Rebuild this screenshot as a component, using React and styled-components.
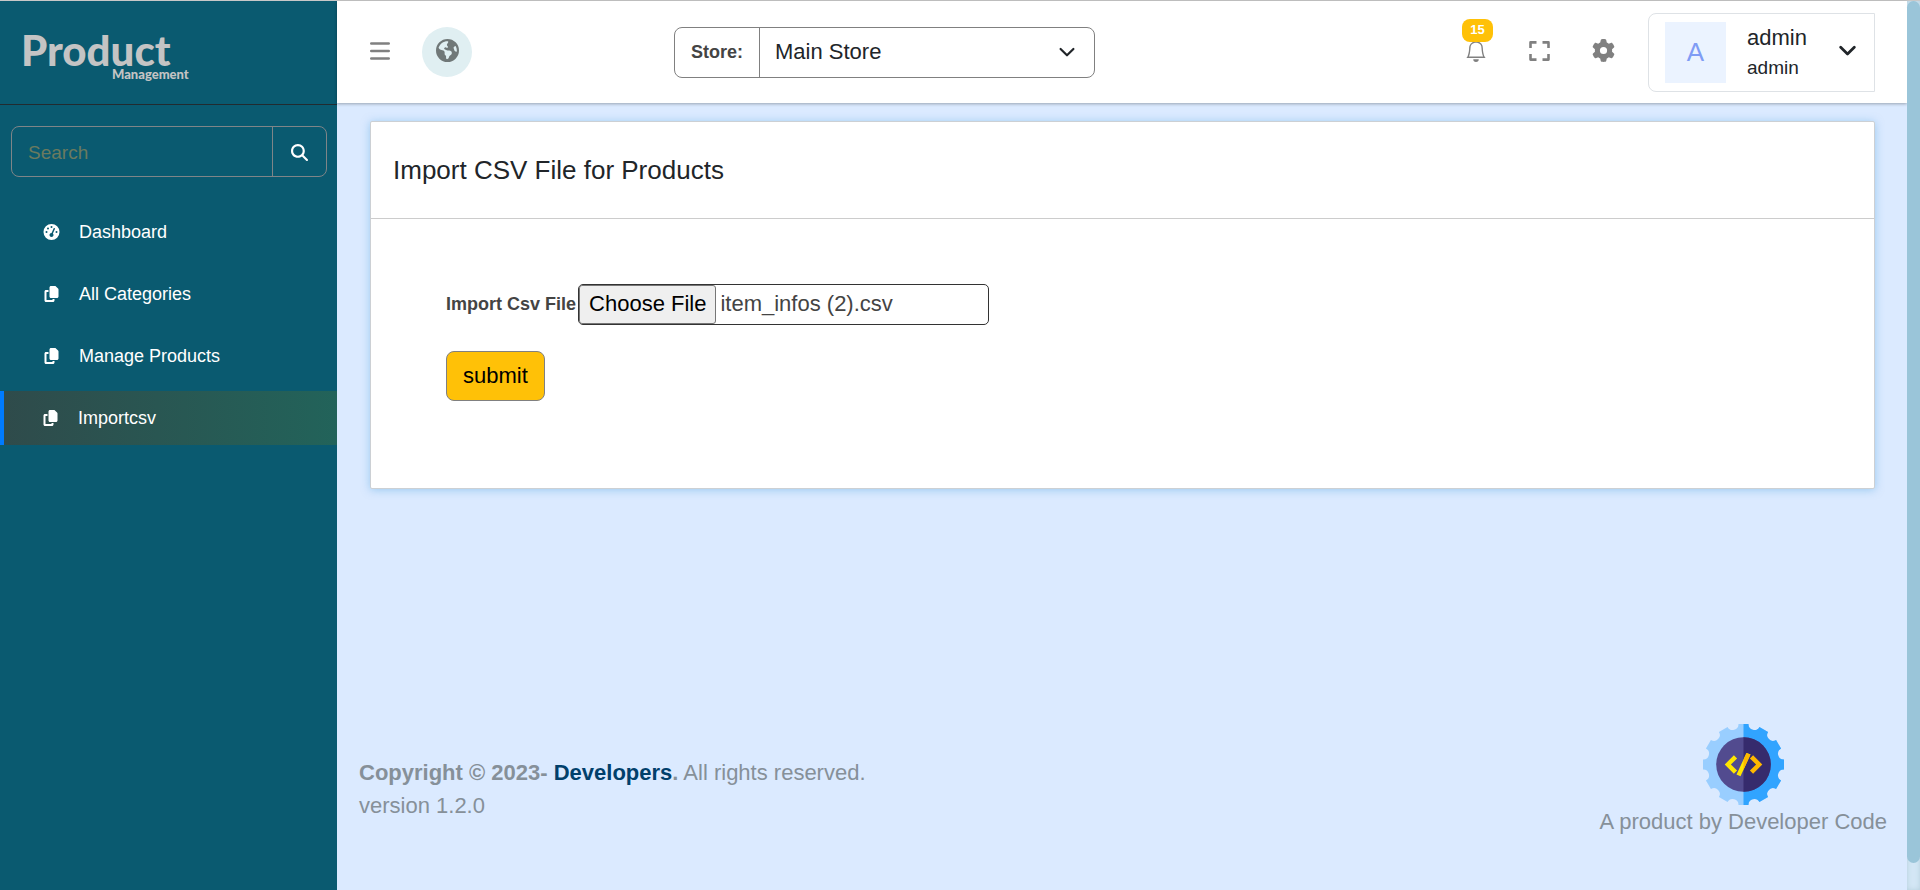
import React, { useState } from 'react';
import styled, { createGlobalStyle } from 'styled-components';
import { BsBell } from 'react-icons/bs';
import { FaCopy, FaEarthAmericas, FaGaugeHigh, FaGear, FaMagnifyingGlass } from 'react-icons/fa6';

const GlobalStyle = createGlobalStyle`
  *, *::before, *::after { box-sizing: border-box; }
  body {
    margin: 0;
    background: #dbeaff;
    color: #212529;
    font-family: "Liberation Sans", Arial, sans-serif;
    font-size: 22px;
    line-height: 33px;
  }
  button, input, select { font: inherit; color: inherit; }
  svg { display: block; }
`;

const Shell = styled.div`
  display: flex;
  min-height: 100vh;
  border-top: 1px solid #c8c8c8;
`;

const Sidebar = styled.aside`
  flex: 0 0 337px;
  min-width: 0;
  background: #0a5a70;
  color: #fff;
`;

const Brand = styled.a`
  display: flex;
  flex-direction: column;
  height: 104px;
  padding: 32px 0 0 21px;
  border-bottom: 1px solid #222b30;
  color: #c4c4c4;
  font-family: Lato, sans-serif;
  font-weight: 900;
  text-decoration: none;
`;

const BrandName = styled.span`
  font-size: 42px;
  line-height: 34px;
`;

const BrandTag = styled.span`
  padding-left: 91px;
  font-size: 13px;
  line-height: 14px;
`;

const SearchForm = styled.form`
  display: flex;
  height: 51px;
  margin: 21px 10px 28px 11px;
  border: 1px solid #7f8588;
  border-radius: 8px;
`;

const SearchInput = styled.input`
  flex: 1;
  min-width: 0;
  padding: 2px 16px 0;
  border: 0;
  border-right: 1px solid #7f8588;
  background: transparent;
  font-size: 19px;
  outline: 0;
  &::placeholder { color: #6b7a5f; opacity: 1; }
`;

const SearchButton = styled.button`
  display: grid;
  place-items: center;
  width: 53px;
  padding: 2px 0 0;
  border: 0;
  background: transparent;
  font-size: 17px;
`;

const Nav = styled.nav`
  display: flex;
  flex-direction: column;
  gap: 8px;
`;

const NavLink = styled.a`
  display: flex;
  align-items: center;
  gap: 19px;
  height: 54px;
  padding-left: ${(p) => (p.$active ? 38 : 43)}px;
  border-left: ${(p) => (p.$active ? '4px solid #007bff' : '0')};
  background: ${(p) => (p.$active ? 'linear-gradient(90deg, #2f4b4b, #22635a)' : 'none')};
  color: #fff;
  font-size: 18px;
  text-decoration: none;
  svg { width: 17px; height: 16px; }
`;

const Main = styled.div`
  flex: 1;
  min-width: 0;
  display: flex;
  flex-direction: column;
`;

const Header = styled.header`
  display: flex;
  align-items: center;
  height: 102px;
  padding: 0 32px 0 33px;
  background: #fff;
  box-shadow: 0 1px 3px rgba(0, 0, 0, 0.3);
  color: #808080;
`;

const IconButton = styled.button`
  position: relative;
  padding: 0 0 3px;
  border: 0;
  background: transparent;
  color: #808080;
`;

const GlobeButton = styled.button`
  display: grid;
  place-items: center;
  width: 50px;
  height: 50px;
  margin-left: 32px;
  padding: 0 0 3px;
  border: 0;
  border-radius: 50%;
  background: #e0eff2;
  color: #707878;
`;

const StoreGroup = styled.div`
  display: flex;
  flex: 0 1 421px;
  height: 51px;
  margin-left: 202px;
  border: 1px solid #808080;
  border-radius: 8px;
`;

const StoreLabel = styled.label`
  display: flex;
  align-items: center;
  padding: 0 16px;
  border-right: 1px solid #808080;
  color: #444;
  font-size: 18px;
  font-weight: 700;
`;

const SelectWrap = styled.div`
  position: relative;
  flex: 1;
  svg {
    position: absolute;
    top: 16px;
    right: 19px;
    pointer-events: none;
  }
`;

const StoreSelect = styled.select`
  width: 100%;
  height: 100%;
  padding: 0 48px 2px 15px;
  border: 0;
  background: transparent;
  color: #212529;
  appearance: none;
`;

const Tools = styled.div`
  display: flex;
  align-items: center;
  gap: 42px;
  margin-left: auto;
`;

const Badge = styled.span`
  position: absolute;
  left: -3px;
  bottom: 23px;
  width: 31px;
  height: 23px;
  border-radius: 8px;
  background: #ffc107;
  color: #fff;
  font-size: 13px;
  font-weight: 700;
  line-height: 22px;
`;

const UserMenu = styled.button`
  display: flex;
  align-items: center;
  width: 227px;
  height: 79px;
  margin-left: -9px;
  padding: 0 18px 0 16px;
  border: 1px solid #dee2e6;
  border-radius: 8px 0 0 8px;
  background: #fff;
  color: #212529;
  text-align: left;
  svg { margin: 0 0 4px auto; }
`;

const Avatar = styled.span`
  display: grid;
  place-items: center;
  width: 61px;
  height: 61px;
  margin-right: 21px;
  background: #ebf3ff;
  color: #7f9cf5;
  font-size: 26px;
`;

const UserText = styled.span`
  display: flex;
  flex-direction: column;
  padding-top: 2px;
  line-height: 30px;
  small { font-size: 19px; }
`;

const Card = styled.section`
  margin: 18px 32px 0 33px;
  border: 1px solid #ccd0d4;
  border-radius: 2px;
  background: #fff;
  box-shadow: 0 1px 8px rgba(90, 170, 225, 0.5);
`;

const CardTitle = styled.h1`
  margin: 0;
  padding: 32px 22px 31px;
  border-bottom: 1px solid #ccc;
  font-size: 26px;
  font-weight: 400;
  line-height: 33px;
`;

const ImportForm = styled.form`
  display: flex;
  flex-direction: column;
  align-items: flex-start;
  gap: 26px;
  padding: 65px 75px 87px;
`;

const FileRow = styled.div`
  display: flex;
  align-items: center;
  gap: 2px;
  color: #444;
`;

const FileLabel = styled.label`
  font-size: 18px;
  font-weight: 700;
`;

const FilePicker = styled.div`
  position: relative;
  display: flex;
  width: 411px;
  height: 41px;
  border: 1px solid #333;
  border-radius: 5px;
  line-height: 35px;
`;

const FileInput = styled.input`
  position: absolute;
  inset: 0;
  width: 100%;
  opacity: 0;
`;

const FileButton = styled.span`
  padding: 0 9px;
  border: 1px solid #767676;
  border-radius: 3px;
  background: #efefef;
  color: #000;
`;

const FileName = styled.span`
  padding: 1px 4px;
`;

const SubmitButton = styled.button`
  height: 50px;
  padding: 0 16px 2px;
  border: 1px solid #808080;
  border-radius: 8px;
  background: #ffc107;
  color: #000;
`;

const Footer = styled.footer`
  display: flex;
  align-items: flex-end;
  justify-content: space-between;
  margin-top: auto;
  padding: 0 20px 52px 22px;
  color: #869099;
`;

const Copyright = styled.p`
  margin: 0;
  padding-bottom: 16px;
  a { color: #01406b; text-decoration: none; }
`;

const Product = styled.div`
  display: flex;
  flex-direction: column;
  align-items: center;
`;

const ScrollTrack = styled.div`
  flex: 0 0 13px;
  height: calc(100vh - 1px);
  background: #d3e6f5;
  box-shadow: inset 0 0 5px #b5d0dc;
`;

const ScrollThumb = styled.div`
  height: 97%;
  border-radius: 7px;
  background: #9ac5d9;
`;

const MenuIcon = () => (
  <svg width="20" height="18" viewBox="0 0 20 18" stroke="currentColor" strokeWidth="2.6" strokeLinecap="round">
    <path d="M1.3 1.5h17.4M1.3 9h17.4M1.3 16.5h17.4" />
  </svg>
);

const FullscreenIcon = () => (
  <svg width="21" height="20" viewBox="0 0 21 20" fill="none" stroke="currentColor" strokeWidth="2.6" strokeLinejoin="round">
    <path d="M1.5 7V1.4H7.5M13.5 1.4H19.5V7M19.5 13V18.6H13.5M7.5 18.6H1.5V13" />
  </svg>
);

const Chevron = ({ width = 16, stroke = 2.2 }) => (
  <svg width={width} height={width} viewBox="0 0 16 16" fill="none" stroke="#212529" strokeWidth={stroke} strokeLinecap="round" strokeLinejoin="round">
    <path d="M1.6 5l6.4 6.3L14.4 5" />
  </svg>
);

const gearPath = (() => {
  const point = (x, y, deg) => {
    const a = (deg * Math.PI) / 180;
    return `${(x * Math.cos(a) - y * Math.sin(a)).toFixed(2)} ${(x * Math.sin(a) + y * Math.cos(a)).toFixed(2)}`;
  };
  let d = `M${point(-5, -40.5, 0)}`;
  for (let i = 0; i < 12; i += 1) {
    d += `L${point(5, -40.5, i * 30)}A5.8 5.8 0 0 0 ${point(-5, -40.5, (i + 1) * 30)}`;
  }
  return `${d}Z`;
})();

const CodeGear = () => (
  <svg width="81" height="81" viewBox="-40.5 -40.5 81 81" aria-hidden="true">
    <defs>
      <clipPath id="rightHalf"><rect x="0" y="-41" width="41" height="82" /></clipPath>
    </defs>
    <path d={gearPath} fill="#99ceff" />
    <path d={gearPath} fill="#31a4ff" clipPath="url(#rightHalf)" />
    <circle r="27.3" fill="#524b8f" />
    <circle r="27.3" fill="#362b6d" clipPath="url(#rightHalf)" />
    <path d="M-18.8 0L-9.6 -9.2L-6.4 -6L-12.6 0L-6.4 6L-9.6 9.2Z" fill="#ffe600" />
    <path d="M18.8 0L9.6 -9.2L6.4 -6L12.6 0L6.4 6L9.6 9.2Z" fill="#ffb800" />
    <path d="M3 -11.4L7 -10L-3 11.7L-7 10Z" fill="#ffe600" />
    <path d="M3 -11.4L7 -10L-3 11.7L-7 10Z" fill="#ffb800" clipPath="url(#rightHalf)" />
  </svg>
);

const links = [
  { label: 'Dashboard', icon: FaGaugeHigh },
  { label: 'All Categories', icon: FaCopy },
  { label: 'Manage Products', icon: FaCopy },
  { label: 'Importcsv', icon: FaCopy, active: true },
];

export default function App() {
  const [fileName, setFileName] = useState('item_infos (2).csv');

  return (
    <>
      <GlobalStyle />
      <Shell>
        <Sidebar>
          <Brand href="#">
            <BrandName>Product</BrandName>
            <BrandTag>Management</BrandTag>
          </Brand>
          <SearchForm role="search">
            <SearchInput type="search" placeholder="Search" aria-label="Search" />
            <SearchButton type="button" aria-label="Run search"><FaMagnifyingGlass /></SearchButton>
          </SearchForm>
          <Nav>
            {links.map(({ label, icon: Icon, active }) => (
              <NavLink key={label} href="#" $active={active}>
                <Icon />
                {label}
              </NavLink>
            ))}
          </Nav>
        </Sidebar>

        <Main>
          <Header>
            <IconButton aria-label="Toggle menu"><MenuIcon /></IconButton>
            <GlobeButton aria-label="Visit site"><FaEarthAmericas size={23} /></GlobeButton>
            <StoreGroup>
              <StoreLabel htmlFor="store">Store:</StoreLabel>
              <SelectWrap>
                <StoreSelect id="store"><option>Main Store</option></StoreSelect>
                <Chevron />
              </SelectWrap>
            </StoreGroup>
            <Tools>
              <IconButton aria-label="Notifications">
                <BsBell size={22} />
                <Badge>15</Badge>
              </IconButton>
              <IconButton aria-label="Fullscreen"><FullscreenIcon /></IconButton>
              <IconButton aria-label="Settings"><FaGear size={23} /></IconButton>
              <UserMenu>
                <Avatar>A</Avatar>
                <UserText>
                  <span>admin</span>
                  <small>admin</small>
                </UserText>
                <Chevron width={17} stroke={2.6} />
              </UserMenu>
            </Tools>
          </Header>

          <Card>
            <CardTitle>Import CSV File for Products</CardTitle>
            <ImportForm onSubmit={(e) => e.preventDefault()}>
              <FileRow>
                <FileLabel htmlFor="csv">Import Csv File</FileLabel>
                <FilePicker>
                  <FileButton>Choose File</FileButton>
                  <FileName>{fileName}</FileName>
                  <FileInput
                    id="csv"
                    type="file"
                    accept=".csv"
                    onChange={(e) => e.target.files[0] && setFileName(e.target.files[0].name)}
                  />
                </FilePicker>
              </FileRow>
              <SubmitButton type="submit">submit</SubmitButton>
            </ImportForm>
          </Card>

          <Footer>
            <Copyright>
              <strong>Copyright © 2023- <a href="#">Developers</a>.</strong> All rights reserved.
              <br />
              version 1.2.0
            </Copyright>
            <Product>
              <CodeGear />
              <span>A product by Developer Code</span>
            </Product>
          </Footer>
        </Main>

        <ScrollTrack><ScrollThumb /></ScrollTrack>
      </Shell>
    </>
  );
}
